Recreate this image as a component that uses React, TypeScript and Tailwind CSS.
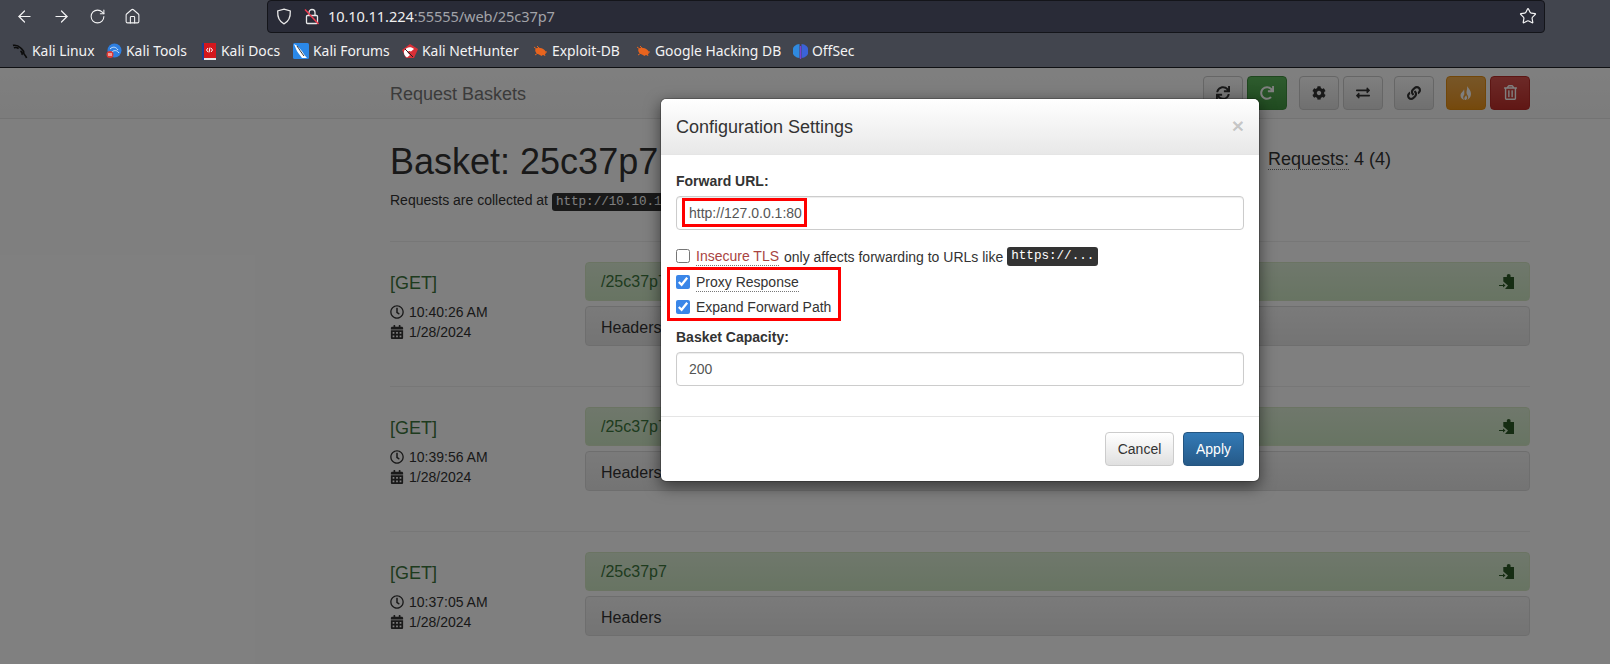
import { ArrowLeft, ArrowRight, RotateCw, House, Star } from 'lucide-react'
import {
  FaSync,
  FaRedo,
  FaCog,
  FaExchangeAlt,
  FaLink,
  FaRegTrashAlt,
  FaRegClock,
  FaCalendarAlt,
} from 'react-icons/fa'

const sans = 'font-["Liberation_Sans",Arial,sans-serif]'

function KaliIcon() {
  return (
    <svg width="17" height="17" viewBox="0 0 17 17" fill="none" stroke="#0c0c0c" strokeWidth="1.700">
      <path d="M1 2c3-.5 6 .5 8 2.500 2 2 4 3 3.500 5.500-.3 1.500 2 2 3 5.500M2 4.500c2-.5 4 0 5 1M9 8c1.500 1 2 3 1.500 4" />
    </svg>
  )
}

function ToolsIcon() {
  return (
    <svg width="16" height="16" viewBox="0 0 16 16">
      <circle cx="8.500" cy="7.500" r="7" fill="#2f7fe0" />
      <path d="M4 6c3-3 6-2 8 1M6 9c2-2 5-2 7 1" stroke="#cfe4fb" strokeWidth="1" fill="none" />
      <circle cx="4" cy="11.500" r="3.500" fill="#e03a34" />
      <path d="M3 10v3M5 10v3" stroke="#fff" strokeWidth="1" />
    </svg>
  )
}

function DocsIcon() {
  return (
    <svg width="14" height="17" viewBox="0 0 14 17">
      <rect x="0" y="0" width="14" height="15" fill="#d3171d" />
      <rect x="0" y="0" width="2" height="17" fill="#1d3f8f" />
      <rect x="2" y="15" width="12" height="2" fill="#e6e6e6" />
      <path d="M6 5 4.500 7 6 9M9 5l1.500 2L9 9M8 4.500 7 9.500" stroke="#fff" strokeWidth="1" fill="none" />
    </svg>
  )
}

function ForumsIcon() {
  return (
    <svg width="16" height="16" viewBox="0 0 16 16">
      <rect width="16" height="16" rx="1.500" fill="#2b88e8" />
      <path d="M1 1c4 2 5 4 7 6s3 5 6 8l-5 0C7 12 4 9 3 6 2.500 4 1.500 3 1 1Z" fill="#fff" />
      <path d="M4 3c2 3 4 6 7 10" stroke="#333" strokeWidth="1" fill="none" />
    </svg>
  )
}

function HunterIcon() {
  return (
    <svg width="16" height="16" viewBox="0 0 16 16">
      <path d="M8 1 16 6 12 15H4L0 7Z" fill="#d92f37" />
      <path d="M2 8c2-4 7-5 10-2L9 8.500C7.500 7.500 6 8 5.500 9.500L8 12 5 14.500C2.500 13 1.500 10.500 2 8Z" fill="#fff" />
      <path d="M3 6l8 8" stroke="#222" strokeWidth="1" />
    </svg>
  )
}

function BugIcon() {
  return (
    <svg width="14" height="12" viewBox="0 0 14 12">
      <ellipse cx="7.500" cy="6.500" rx="5.500" ry="3.500" fill="#e8641e" transform="rotate(20 7.500 6.500)" />
      <path d="M1 2l4 3M4 1l3 3M2 10l3-2M8 11l1-2M12 11l-1-2M14 7h-2" stroke="#e8641e" strokeWidth="1" />
    </svg>
  )
}

function OffSecIcon() {
  return (
    <svg width="15" height="16" viewBox="0 0 15 16">
      <path d="M6.500 1A7 7 0 0 0 6.500 15Z" fill="#2f8ae0" />
      <path d="M8.500 1A7 7 0 0 1 8.500 15Z" fill="#3a63d8" />
      <rect x="6.800" y="3" width="1.400" height="13" fill="#7b3fd0" />
    </svg>
  )
}

function ClipIcon() {
  return (
    <svg width="15" height="15" viewBox="0 0 15 15" fill="#2d5a27">
      <circle cx="9.700" cy="2" r="2" />
      <path d="M4.300 3H15v12H6l3-3.500L4.300 7.500Z" />
      <path d="M0 11h4V9.500l2.500 2L4 13.500V12H0Z" />
    </svg>
  )
}

function FlameIcon() {
  return (
    <svg width="14" height="14" viewBox="0 0 14 14" fill="currentColor">
      <path d="M8 0c1 2 4 4 4 8 0 3-2 5-4 6 1-1 1.500-2.500 1-4-.5-1-1.500-2-1.500-3.500C7.500 4.500 8.500 3 8 0Z" />
      <path d="M5 3c0 2-3.500 3.500-3.500 6.500 0 2.500 2 4 4 4.500-1-1-1.500-2-1.200-3.500.3-1 1-1.500 1-2.500C5.300 6.500 5.500 5 5 3Z" />
      <path d="M7 9c.5 1.500 1.500 2 1 3.500-.3.8-1 1.500-1.500 1.500-1 0-1.500-1-1-2.500C6 10.500 7 10 7 9Z" />
    </svg>
  )
}

const bookmarks = [
  { name: 'Kali Linux', icon: <KaliIcon />, w: 94 },
  { name: 'Kali Tools', icon: <ToolsIcon />, w: 95 },
  { name: 'Kali Docs', icon: <DocsIcon />, w: 92 },
  { name: 'Kali Forums', icon: <ForumsIcon />, w: 109 },
  { name: 'Kali NetHunter', icon: <HunterIcon />, w: 130 },
  { name: 'Exploit-DB', icon: <BugIcon />, w: 103 },
  { name: 'Google Hacking DB', icon: <BugIcon />, w: 157 },
  { name: 'OffSec', icon: <OffSecIcon />, w: 70 },
]

function BrowserChrome() {
  return (
    <div className='h-[68px] bg-[#42454e] border-b border-[#0f1013] font-["Noto_Sans",sans-serif] text-[#f3f3f4]'>
      <div className="h-[33px] flex items-center">
        <div className="flex items-center w-[267px] pl-[15px] gap-[18px]">
          <ArrowLeft size={19} strokeWidth={1.5} />
          <ArrowRight size={19} strokeWidth={1.5} />
          <RotateCw size={17} strokeWidth={1.5} />
          <House size={17} strokeWidth={1.5} />
        </div>
        <div className="w-[1278px] h-[33px] rounded-[4px] bg-[#292b37] border border-[#14151a] flex items-center pl-[8px] pr-[7px] -mt-[1px]">
          <svg width="16" height="17" viewBox="0 0 16 17" fill="none" stroke="#e8e8e8" strokeWidth="1.300">
            <path d="M8 1.200 14.300 3c.3 6-1.500 10.500-6.300 12.800C3.200 13.500 1.400 9 1.700 3Z" />
          </svg>
          <svg className="ml-[12px]" width="16" height="17" viewBox="0 0 16 17" fill="none" stroke="#e8e8e8" strokeWidth="1.300">
            <rect x="2.500" y="7.500" width="11" height="8" rx="1" />
            <path d="M5 7.500V4.500a3 3 0 0 1 6 0v3" />
            <path d="M1 1.500 14.500 16" stroke="#ef3b50" strokeWidth="1.500" />
          </svg>
          <span className="ml-[8px] pt-[2px] text-[14.600px] tracking-[-0.1px] text-[#eeeeef]">
            10.10.11.224<span className="text-[#a2a3a9]">:55555/web/25c37p7</span>
          </span>
          <Star size={18} strokeWidth={1.6} className="ml-auto" />
        </div>
      </div>
      <div className="h-[34px] pt-[3px] flex items-center pl-[12px]">
        {bookmarks.map((b) => (
          <div key={b.name} className="flex items-center gap-[4px] text-[13.900px] whitespace-nowrap shrink-0" style={{ width: b.w }}>
            <span className="flex justify-center w-[16px] shrink-0">{b.icon}</span>
            <span>{b.name}</span>
          </div>
        ))}
      </div>
    </div>
  )
}

function NavButton({ children, tone }: { children: React.ReactNode; tone?: 'green' | 'orange' | 'red' }) {
  const cls =
    tone === 'green'
      ? 'from-[#5cb85c] to-[#419641] border-[#3e8f3e] text-white'
      : tone === 'orange'
        ? 'from-[#f0ad4e] to-[#eb9316] border-[#e38d13] text-white'
        : tone === 'red'
          ? 'from-[#d9534f] to-[#c12e2a] border-[#b92c28] text-white'
          : 'from-white to-[#e0e0e0] border-[#ccc] text-[#333]'
  return (
    <button className={`w-[40px] h-[34px] rounded-[4px] border bg-gradient-to-b flex items-center justify-center text-[14px] ${cls}`}>
      {children}
    </button>
  )
}

function RequestRow({ time }: { time: string }) {
  return (
    <div className="border-t border-[#eee] pt-[20px] pb-[40px] flex h-[145px]">
      <div className="w-[195px] shrink-0">
        <div className="text-[18px] leading-[20px] mt-[11px] text-[#3c763d]">[GET]</div>
        <div className="mt-[9px] text-[14px] leading-[20px] text-[#333]">
          <div className="flex items-center gap-[5px]">
            <FaRegClock size={14} />
            {time}
          </div>
          <div className="flex items-center gap-[5px]">
            <FaCalendarAlt size={14} />
            1/28/2024
          </div>
        </div>
      </div>
      <div className="flex-1">
        <div className="h-[39px] rounded-[4px] border border-[#d6e9c6] bg-gradient-to-b from-[#dff0d8] to-[#d0e9c6] px-[15px] flex items-center justify-between text-[16px] text-[#3c763d]">
          /25c37p7
          <ClipIcon />
        </div>
        <div className="mt-[5px] h-[40px] rounded-[4px] border border-[#ddd] bg-gradient-to-b from-[#f5f5f5] to-[#e8e8e8] px-[15px] pt-[3px] flex items-center text-[16px] text-[#333]">
          Headers
        </div>
      </div>
    </div>
  )
}

function Page() {
  return (
    <div className={`bg-white ${sans}`}>
      <div className="h-[51px] border-b border-[#e7e7e7] bg-gradient-to-b from-white to-[#f8f8f8] pl-[390px] pr-[80px] flex items-center">
        <span className="text-[18px] text-[#777] pt-[2px]">Request Baskets</span>
        <div className="ml-auto flex items-center -mt-[1px]">
          <div className="flex gap-[4px]">
            <NavButton><FaSync /></NavButton>
            <NavButton tone="green"><FaRedo /></NavButton>
          </div>
          <div className="flex gap-[4px] ml-[12px]">
            <NavButton><FaCog /></NavButton>
            <NavButton><FaExchangeAlt /></NavButton>
          </div>
          <div className="ml-[11px]">
            <NavButton><FaLink /></NavButton>
          </div>
          <div className="flex gap-[4px] ml-[12px]">
            <NavButton tone="orange"><FlameIcon /></NavButton>
            <NavButton tone="red"><FaRegTrashAlt size={15} /></NavButton>
          </div>
        </div>
      </div>
      <div className="ml-[390px] w-[1140px]">
        <div className="flex pt-[23px] h-[122px]">
          <div className="flex-1">
            <h1 className="text-[36px] leading-[40px] text-[#333]">Basket: 25c37p7</h1>
            <p className="mt-[8px] text-[14px] leading-[20px] text-[#333]">
              Requests are collected at{' '}
              <kbd className='font-["Liberation_Mono",monospace] text-[12.600px] bg-[#333] text-white rounded-[3px] px-[4px] py-[2px]'>
                http://10.10.11.224:55555/25c37p7
              </kbd>
            </p>
          </div>
          <div className="w-[262px] text-[18px] leading-[20px] text-[#333] pt-[7px]">
            <abbr className="no-underline border-b border-dotted border-[#777]">Requests:</abbr> 4 (4)
          </div>
        </div>
        <RequestRow time="10:40:26 AM" />
        <RequestRow time="10:39:56 AM" />
        <RequestRow time="10:37:05 AM" />
      </div>
    </div>
  )
}

function ConfigModal() {
  const inputCls =
    'block w-full h-[34px] rounded-[4px] border border-[#ccc] px-[12px] text-[14px] text-[#555] bg-white shadow-[inset_0_1px_1px_rgba(0,0,0,.075)] outline-none'
  const boxCls = 'w-[14px] h-[14px] m-0 accent-[#3a86e8] shrink-0'
  return (
    <div className={`absolute left-[660px] top-[98px] w-[600px] h-[384px] rounded-[6px] bg-white bg-clip-padding border border-black/20 shadow-[0_5px_15px_rgba(0,0,0,.5)] ${sans}`}>
      <div className="h-[56px] rounded-t-[6px] border-b border-[#e5e5e5] bg-gradient-to-b from-white to-[#e8e8e8] px-[15px] flex items-center justify-between">
        <h4 className="text-[18px] text-[#333] pt-[2px]">Configuration Settings</h4>
        <span className="text-[21px] font-bold leading-none text-black/20 -mt-[2px]">×</span>
      </div>
      <div className="px-[15px] pt-[16px] text-[14px] leading-[20px] text-[#333]">
        <label className="block font-bold mb-[5px]">Forward URL:</label>
        <input className={inputCls} readOnly value="http://127.0.0.1:80" />
        <div className="mt-[16px] h-[20px] flex items-center gap-[6px]">
          <input type="checkbox" className={boxCls} readOnly />
          <span className="mt-[2px] text-[#a94442] border-b border-dotted border-[#777] leading-[17px]">Insecure TLS</span>
          <span className="mt-[2px] -ml-[1px]">only affects forwarding to URLs like</span>
          <kbd className='-ml-[2px] font-["Liberation_Mono",monospace] text-[12.600px] leading-[15px] bg-[#333] text-white rounded-[3px] px-[4px] py-[2px]'>
            https://...
          </kbd>
        </div>
        <div className="mt-[6px] h-[20px] flex items-center gap-[6px]">
          <input type="checkbox" className={boxCls} checked readOnly />
          <span className="mt-[2px] border-b border-dotted border-[#777] leading-[17px]">Proxy Response</span>
        </div>
        <div className="mt-[5px] h-[20px] flex items-center gap-[6px]">
          <input type="checkbox" className={boxCls} checked readOnly />
          <span>Expand Forward Path</span>
        </div>
        <label className="block font-bold mt-[10px] mb-[5px]">Basket Capacity:</label>
        <input className={inputCls} readOnly value="200" />
      </div>
      <div className="mt-[30px] border-t border-[#e5e5e5] pt-[15px] px-[15px] flex justify-end gap-[9px]">
        <button className="w-[69px] h-[34px] rounded-[4px] border border-[#ccc] bg-gradient-to-b from-white to-[#e0e0e0] text-[14px] text-[#333]">
          Cancel
        </button>
        <button className="w-[61px] h-[34px] rounded-[4px] border border-[#245580] bg-gradient-to-b from-[#337ab7] to-[#265a88] text-[14px] text-white">
          Apply
        </button>
      </div>
      {/* red annotation boxes from the write-up */}
      <div className="absolute left-[21px] top-[99px] w-[125px] h-[29px] border-[3px] border-[#ff0000]" />
      <div className="absolute left-[6px] top-[168px] w-[174px] h-[54px] border-[3px] border-[#ff0000]" />
    </div>
  )
}

export default function App() {
  return (
    <div className="relative w-[1610px] h-[664px] overflow-hidden bg-white">
      <BrowserChrome />
      <Page />
      <div className="absolute inset-x-0 top-[68px] bottom-0 bg-black/50" />
      <ConfigModal />
    </div>
  )
}
